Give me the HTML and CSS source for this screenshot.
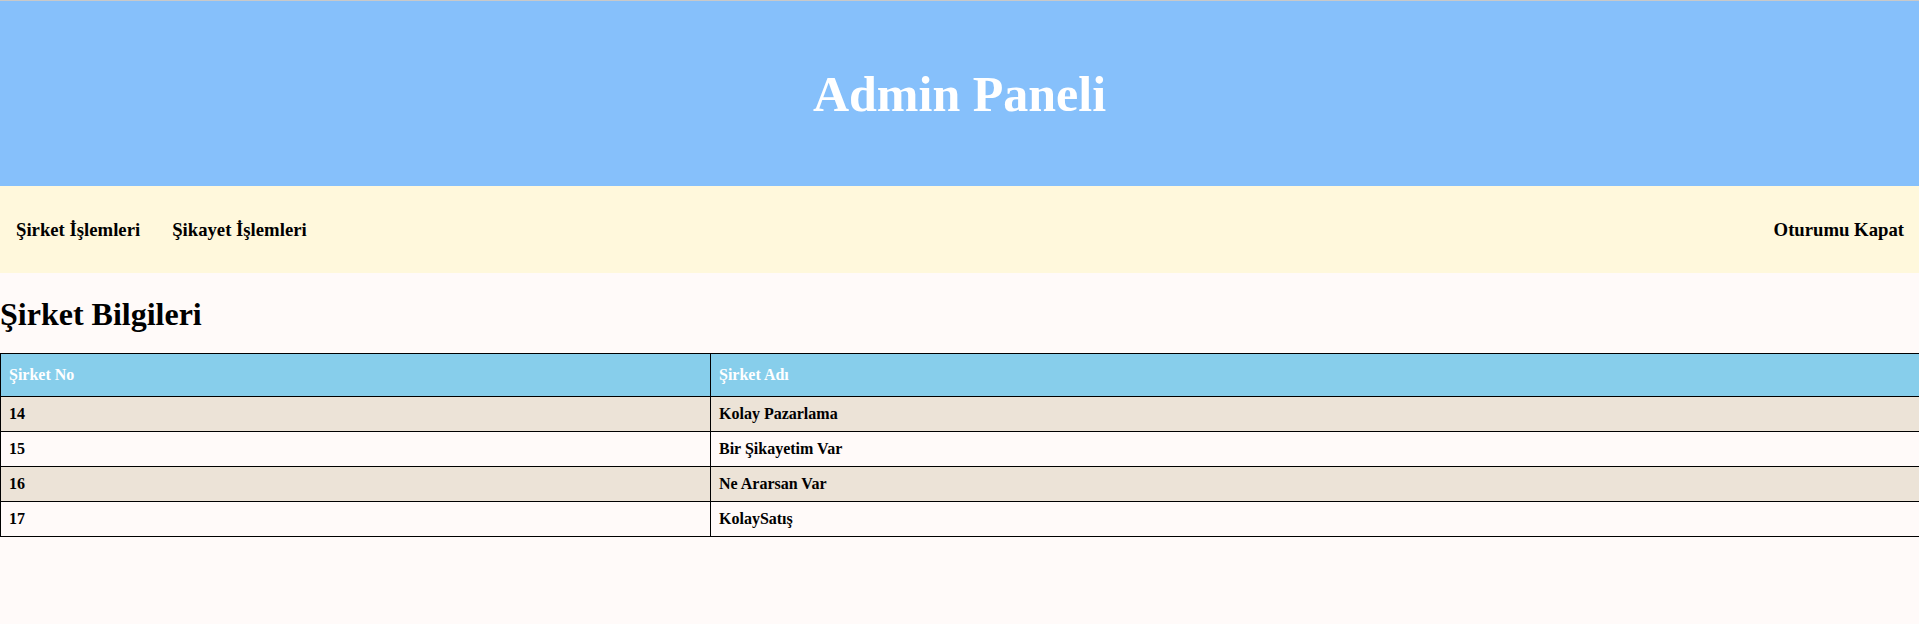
FILE: index.html
```html
<!DOCTYPE html>
<html lang="tr">
<head>
<meta charset="utf-8">
<title>Admin Paneli</title>
<link rel="stylesheet" href="styles.css">
</head>
<body>
<header class="top">
  <h1 class="top-title">Admin Paneli</h1>
</header>
<nav class="menu">
  <div class="menu-left">
    <a class="menu-link" href="#">Şirket İşlemleri</a>
    <a class="menu-link" href="#">Şikayet İşlemleri</a>
  </div>
  <a class="menu-link" href="#">Oturumu Kapat</a>
</nav>
<main class="content">
  <h2 class="section-title">Şirket Bilgileri</h2>
  <div class="table-wrap">
    <table class="data">
      <thead>
        <tr><th class="col-no">Şirket No</th><th>Şirket Adı</th></tr>
      </thead>
      <tbody>
        <tr><td>14</td><td>Kolay Pazarlama</td></tr>
        <tr><td>15</td><td>Bir Şikayetim Var</td></tr>
        <tr><td>16</td><td>Ne Ararsan Var</td></tr>
        <tr><td>17</td><td>KolaySatış</td></tr>
      </tbody>
    </table>
  </div>
</main>
</body>
</html>
```
FILE: styles.css
```css
html, body {
  margin: 0;
  padding: 0;
}
body {
  background: #fffaf9;
  font-family: "Liberation Serif", "Times New Roman", serif;
  color: #000;
  border-top: 1px solid #c9c9c9;
}
.top {
  background: #86c0fb;
  height: 185px;
  display: flex;
  align-items: center;
  justify-content: center;
}
.top-title {
  margin: 0;
  color: #fff;
  font-size: 50px;
  font-weight: bold;
  line-height: 56px;
}
.menu {
  background: #fff8dc;
  height: 87px;
  display: flex;
  align-items: center;
  justify-content: space-between;
}
.menu-left {
  display: flex;
}
.menu-link {
  padding: 0 16px 0 16px;
  font-size: 18.72px;
  font-weight: bold;
  color: #000;
  text-decoration: none;
}
.menu > .menu-link {
  padding-right: 15px;
}
.section-title {
  margin: 23px 0 21px 0;
  font-size: 32px;
  line-height: 36px;
  font-weight: bold;
}
.table-wrap {
  overflow: hidden;
}
.data {
  border-collapse: collapse;
  width: calc(100% + 2px);
  font-size: 16px;
}
.data th, .data td {
  border: 1px solid #000;
  text-align: left;
  font-weight: bold;
  line-height: 18px;
}
.data th {
  background: #87ceeb;
  color: #fff;
  padding: 12px 8px 12px 8px;
}
.data td {
  padding: 8px;
}
.col-no {
  width: 693px;
}
.data tbody tr:nth-child(odd) td {
  background: #ece3d7;
}
.data tbody tr:nth-child(even) td {
  background: #fffaf9;
}
```
